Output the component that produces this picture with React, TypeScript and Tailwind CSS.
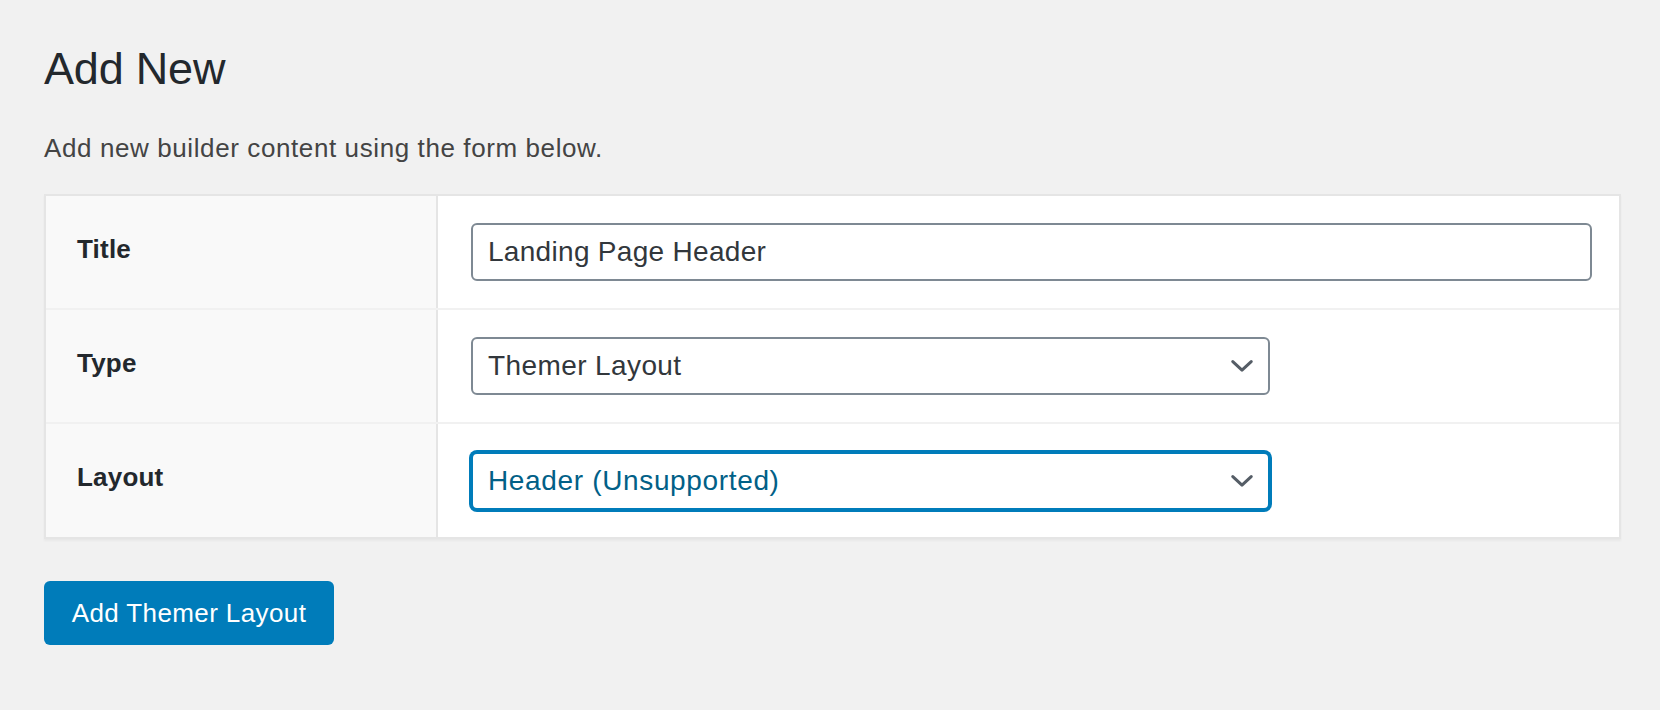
import React from "react";

function Chevron() {
  return (
    <svg width="22" height="12" viewBox="0 0 22 12" fill="none" className="shrink-0">
      <polyline points="1.8,1.6 11,10.2 20.2,1.6" stroke="#555d66" strokeWidth="3" strokeLinecap="round" strokeLinejoin="round" />
    </svg>
  );
}

function Row({ label, children, last }: { label: string; children: React.ReactNode; last?: boolean }) {
  return (
    <div className={`flex ${last ? "h-[113px]" : "h-[114px] border-b-2 border-[#f1f1f1]"}`}>
      <div className="w-[392px] shrink-0 bg-[#f9f9f9] pl-[31px] pt-[35px] border-r-2 border-[#e5e5e5]">
        <span className="text-[26px] leading-[36px] font-bold text-[#23282d] tracking-[0.2px]">{label}</span>
      </div>
      <div className="flex-1 flex items-center pl-[33px]">{children}</div>
    </div>
  );
}

export default function App() {
  return (
    <div
      className="min-h-[710px] w-full bg-[#f1f1f1] pl-[44px] pr-[39px] pt-[41px]"
      style={{ fontFamily: '"Liberation Sans", Arial, sans-serif' }}
    >
      <h1 className="text-[45px] leading-[55px] font-normal text-[#23282d] tracking-[-0.2px]">Add New</h1>
      <p className="mt-[34px] text-[26px] leading-[36px] text-[#444] tracking-[0.6px]">Add new builder content using the form below.</p>
      <div className="mt-[28px] w-full border-2 border-[#e5e5e5] bg-white shadow-[0_2px_2px_rgba(0,0,0,0.04)]">
        <Row label="Title">
          <div className="w-[1121px] h-[58px] border-2 border-[#7e8993] rounded-[6px] bg-white flex items-center px-[15px]">
            <span className="text-[28px] leading-[34px] text-[#32373c] tracking-[0.3px]">Landing Page Header</span>
          </div>
        </Row>
        <Row label="Type">
          <div className="w-[799px] h-[58px] border-2 border-[#7e8993] rounded-[6px] bg-white flex items-center justify-between pl-[15px] pr-[15px]">
            <span className="text-[28px] leading-[34px] text-[#32373c] tracking-[0.4px]">Themer Layout</span>
            <Chevron />
          </div>
        </Row>
        <Row label="Layout" last>
          <div className="w-[799px] h-[58px] border-2 border-[#007cba] shadow-[0_0_0_2px_#007cba] rounded-[6px] bg-white flex items-center justify-between pl-[15px] pr-[15px]">
            <span className="text-[28px] leading-[34px] text-[#016087] tracking-[0.65px]">Header (Unsupported)</span>
            <Chevron />
          </div>
        </Row>
      </div>
      <button className="mt-[42px] w-[290px] h-[64px] rounded-[6px] bg-[#007cba] text-white text-[26px] leading-[32px] tracking-[0.4px] flex items-center justify-center">
        Add Themer Layout
      </button>
    </div>
  );
}
